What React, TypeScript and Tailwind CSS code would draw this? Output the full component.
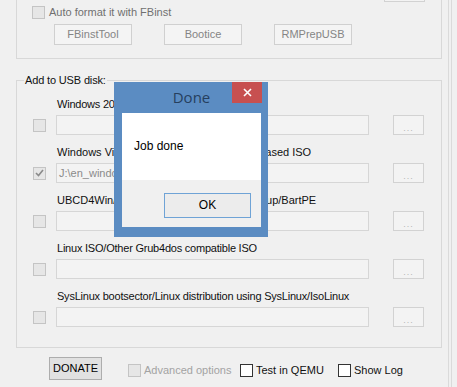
import React from 'react';

const CheckBox: React.FC<{ checked?: boolean; disabled?: boolean; className?: string }> = ({
  checked,
  disabled,
  className = '',
}) => (
  <div
    className={`flex h-[13px] w-[13px] shrink-0 items-center justify-center border ${
      disabled ? 'border-[#c4c4c4] bg-[#e6e6e6]' : 'border-[#333333] bg-white'
    } ${className}`}
  >
    {checked && (
      <svg width="9" height="8" viewBox="0 0 9 8">
        <path d="M1 4 L3.5 6.5 L8 1" fill="none" stroke="#8a8a8a" strokeWidth="1.6" />
      </svg>
    )}
  </div>
);

const DotsButton: React.FC = () => (
  <div className="flex h-[20px] w-[31px] shrink-0 items-end justify-center border border-[#d2d2d2] bg-[#f3f3f3] pb-[1px] text-[9px] leading-[10px] tracking-[1px] text-[#b5b5b5]">
    ...
  </div>
);

const rows = [
  { label: 'Windows 2000/XP/2003 Setup', checked: false, value: '', tight: true },
  {
    label: 'Windows Vista / 7 / 8 / Server 2008/2012 based ISO',
    checked: true,
    value: 'J:\\en_windows_8_1_pro_vl_x64_dvd.iso',
    tight: false,
  },
  { label: 'UBCD4Win/WinBuilder/Windows FLPC setup/BartPE', checked: false, value: '', tight: false },
  { label: 'Linux ISO/Other Grub4dos compatible ISO', checked: false, value: '', tight: true },
  {
    label: 'SysLinux bootsector/Linux distribution using SysLinux/IsoLinux',
    checked: false,
    value: '',
    tight: true,
  },
];

const App: React.FC = () => {
  return (
    <div
      className="relative flex h-[387px] w-[457px] overflow-hidden bg-[#f0f0f0] text-[11px] leading-[13px] text-[#111111]"
      style={{ fontFamily: '"Liberation Sans", Arial, sans-serif' }}
    >
      <div className="w-[447px] shrink-0 pl-[16px]">
        {/* upper group, its top is off-screen */}
        <div className="-mt-[20px] w-[426px] border border-[#d8d8d8] pb-[13px]">
          <div className="flex h-[20px]">
            <div className="ml-[367px] mt-[1px] h-[20px] w-[41px] border border-[#d2d2d2] bg-[#f3f3f3]" />
          </div>
          <div className="mt-[5px] flex items-center">
            <CheckBox disabled className="ml-[15px]" />
            <span className="ml-[4px] text-[#707070]">Auto format it with FBinst</span>
          </div>
          <div className="mt-[5px] flex">
            {['FBinstTool', 'Bootice', 'RMPrepUSB'].map((b, i) => (
              <div
                key={b}
                className={`flex h-[21px] w-[78px] items-center justify-center border border-[#d0d0d0] bg-[#f4f4f4] text-[#858585] ${
                  i === 0 ? 'ml-[37px]' : 'ml-[32px]'
                }`}
              >
                {b}
              </div>
            ))}
          </div>
        </div>

        {/* Add to USB disk */}
        <div className="mt-[21px] w-[426px] border border-[#d8d8d8] pb-[20px]">
          <div className="-mt-[7px] ml-[7px] w-fit bg-[#f0f0f0] px-[1px] tracking-[-0.15px]">Add to USB disk:</div>
          {rows.map((r) => (
            <div key={r.label}>
              <div className={`ml-[40px] mt-[11px] whitespace-nowrap ${r.tight ? 'tracking-[-0.22px]' : ''}`}>
                {r.label}
              </div>
              <div className="mt-[4px] flex items-center">
                <CheckBox disabled checked={r.checked} className="ml-[16px]" />
                <div className="ml-[10px] flex h-[20px] w-[313px] items-center overflow-hidden whitespace-nowrap border border-[#d6d6d6] bg-[#f3f3f3] pl-[2px] text-[#8a8a8a]">
                  {r.value}
                </div>
                <div className="ml-[24px]">
                  <DotsButton />
                </div>
              </div>
            </div>
          ))}
        </div>

        {/* bottom row */}
        <div className="mt-[9px] flex items-start">
          <div className="ml-[33px] flex h-[23px] w-[53px] items-center justify-center border border-[#adadad] bg-[#e1e1e1] text-[#000]">
            DONATE
          </div>
          <div className="ml-[26px] mt-[7px] flex w-[112px] items-center">
            <CheckBox disabled />
            <span className="ml-[3px] text-[#a3a3a3]">Advanced options</span>
          </div>
          <div className="mt-[7px] flex w-[98px] items-center">
            <CheckBox />
            <span className="ml-[3px]">Test in QEMU</span>
          </div>
          <div className="mt-[7px] flex items-center">
            <CheckBox />
            <span className="ml-[3px]">Show Log</span>
          </div>
        </div>
      </div>

      {/* window edge */}
      <div className="ml-[1px] h-full w-[4px] border-x border-[#dadada]" />

      {/* message box */}
      <div className="absolute left-[114px] top-[82px] flex h-[155px] w-[154px] flex-col bg-[#5b8cc2] px-[7px] pb-[10px] pl-[8px]">
        <div className="relative flex h-[31px] items-center justify-center">
          <span
            className="text-[15px] text-[#263f5e]"
            style={{ fontFamily: '"Open Sans", "Liberation Sans", sans-serif' }}
          >
            Done
          </span>
          <div className="absolute -right-[1px] top-0 flex h-[21px] w-[30px] items-center justify-center bg-[#c75050]">
            <svg width="9" height="9" viewBox="0 0 9 9">
              <path d="M1 1 L8 8 M8 1 L1 8" stroke="#ffffff" strokeWidth="1.6" />
            </svg>
          </div>
        </div>
        <div className="flex flex-1 flex-col">
          <div className="flex h-[67px] items-center bg-white pl-[12px] text-[12px] text-black">Job done</div>
          <div className="flex flex-1 items-start justify-end bg-[#f0f0f0] pr-[10px] pt-[13px]">
            <div className="flex h-[25px] w-[87px] items-center justify-center border border-[#6fa3d6] bg-[#ececec] text-[12px] text-black">
              OK
            </div>
          </div>
        </div>
      </div>
    </div>
  );
};

export default App;
